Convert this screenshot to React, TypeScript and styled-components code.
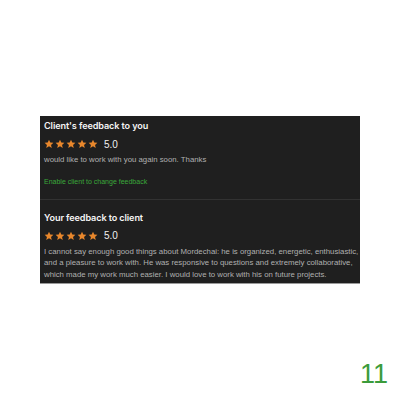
import React from 'react'
import styled, { createGlobalStyle } from 'styled-components'

const GlobalStyle = createGlobalStyle`
    html, body {
        margin: 0;
        padding: 0;
        background: #ffffff;
    }
    body {
        font-family: 'Liberation Sans', Arial, sans-serif;
    }
`

const Star = () => (
    <svg width="10" height="10" viewBox="0 0 24 24">
        <path
            d="M12 1.5l3.1 6.9 7.4.7-5.6 5 1.7 7.4L12 17.6l-6.6 3.9 1.7-7.4-5.6-5 7.4-.7z"
            fill="#e8872c"
        />
    </svg>
)

const Rating = ({ value }: { value: string }) => (
    <RatingRow>
        <Stars>
            {[0, 1, 2, 3, 4].map((i) => (
                <Star key={i} />
            ))}
        </Stars>
        <Score>{value}</Score>
    </RatingRow>
)

const App = () => {
    return (
        <Page>
            <GlobalStyle />
            <Panel>
                <Section>
                    <Title>Client's feedback to you</Title>
                    <Rating value="5.0" />
                    <Comment>would like to work with you again soon. Thanks</Comment>
                    <ActionLink href="#">Enable client to change feedback</ActionLink>
                </Section>
                <Section $last>
                    <Title>Your feedback to client</Title>
                    <Rating value="5.0" />
                    <Comment>
                        <Line>I cannot say enough good things about Mordechai: he is organized, energetic, enthusiastic,</Line>
                        <Line>and a pleasure to work with. He was responsive to questions and extremely collaborative,</Line>
                        <Line>which made my work much easier. I would love to work with his on future projects.</Line>
                    </Comment>
                </Section>
            </Panel>
            <PageNumber>11</PageNumber>
        </Page>
    )
}

export default App

const Page = styled.div`
    width: 400px;
    height: 400px;
    position: relative;
    overflow: hidden;
    padding-top: 116px;
    padding-left: 40px;
    box-sizing: border-box;
`

const Panel = styled.div`
    width: 320px;
    background: #1f1f1f;
    border-bottom: 1px solid #9a9a9a;
`

const Section = styled.section<{ $last?: boolean }>`
    padding: ${({ $last }) => ($last ? '11px 4px 3px' : '3px 4px 14px')};
    border-bottom: ${({ $last }) => ($last ? 'none' : '1px solid #323232')};
    display: flex;
    flex-direction: column;
    align-items: flex-start;
`

const Title = styled.h3`
    margin: 0;
    font-family: Inter, 'Liberation Sans', Arial, sans-serif;
    font-size: 9.1px;
    font-weight: 600;
    letter-spacing: -0.1px;
    line-height: 14px;
    color: #f4f4f4;
`

const RatingRow = styled.div`
    display: flex;
    align-items: center;
    gap: 6px;
    margin-top: 4px;
    height: 14px;
`

const Stars = styled.div`
    display: flex;
    gap: 1px;
`

const Score = styled.span`
    font-size: 10px;
    color: #f0f0f0;
`

const Comment = styled.p`
    margin: 3px 0 0;
    font-size: 7.8px;
    line-height: 11.5px;
    color: #b0b0b0;
`

const Line = styled.span`
    display: block;
    white-space: nowrap;
`

const ActionLink = styled.a`
    margin-top: 12px;
    font-size: 7px;
    color: #3aa83a;
    text-decoration: none;
`

const PageNumber = styled.div`
    position: absolute;
    right: 12px;
    bottom: 10px;
    font-family: 'Liberation Sans', Arial, sans-serif;
    font-size: 27px;
    color: #3b9b3b;
`
